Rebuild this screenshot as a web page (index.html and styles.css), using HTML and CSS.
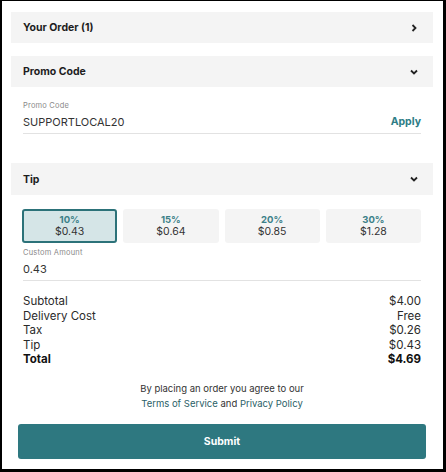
FILE: index.html
```html
<!DOCTYPE html>
<html>
<head>
<meta charset="utf-8">
<link rel="stylesheet" href="styles.css">
</head>
<body>
<div class="frame">
  <div class="section-head">
    <span>Your Order (1)</span>
    <svg class="chev" width="10" height="10" viewBox="0 0 10 10"><polyline points="3.5,2 6.5,5 3.5,8" fill="none" stroke="#222" stroke-width="1.8"/></svg>
  </div>

  <div class="section-head gap">
    <span>Promo Code</span>
    <svg class="chev" width="10" height="10" viewBox="0 0 10 10"><polyline points="2,3.5 5,6.5 8,3.5" fill="none" stroke="#222" stroke-width="1.8"/></svg>
  </div>
  <div class="field promo">
    <div class="field-label">Promo Code</div>
    <div class="field-row">
      <span class="field-value">SUPPORTLOCAL20</span>
      <span class="apply">Apply</span>
    </div>
  </div>

  <div class="section-head tip-head">
    <span>Tip</span>
    <svg class="chev" width="10" height="10" viewBox="0 0 10 10"><polyline points="2,3.5 5,6.5 8,3.5" fill="none" stroke="#222" stroke-width="1.8"/></svg>
  </div>
  <div class="tips">
    <div class="tip selected"><span class="pct">10%</span><span class="amt">$0.43</span></div>
    <div class="tip"><span class="pct">15%</span><span class="amt">$0.64</span></div>
    <div class="tip"><span class="pct">20%</span><span class="amt">$0.85</span></div>
    <div class="tip"><span class="pct">30%</span><span class="amt">$1.28</span></div>
  </div>
  <div class="field custom">
    <div class="field-label">Custom Amount</div>
    <div class="field-row">
      <span class="field-value">0.43</span>
    </div>
  </div>

  <div class="summary">
    <div class="row"><span>Subtotal</span><span>$4.00</span></div>
    <div class="row"><span>Delivery Cost</span><span>Free</span></div>
    <div class="row"><span>Tax</span><span>$0.26</span></div>
    <div class="row"><span>Tip</span><span>$0.43</span></div>
    <div class="row total"><span>Total</span><span>$4.69</span></div>
  </div>

  <div class="terms">
    By placing an order you agree to our<br>
    <span class="link">Terms of Service</span> and <span class="link">Privacy Policy</span>
  </div>

  <div class="submit">Submit</div>
</div>
</body>
</html>
```

FILE: styles.css
```css
* { box-sizing: border-box; }
html, body { margin: 0; padding: 0; background: #fff; }
body {
  font-family: Inter, "Noto Sans", sans-serif;
  color: #222;
}
.frame {
  width: 446px;
  height: 472px;
  border-style: solid;
  border-color: #000;
  border-width: 1px 3px 3px 2px;
  padding: 11px 10px 0 9px;
  display: flex;
  flex-direction: column;
}
.section-head {
  height: 31px;
  background: #f4f4f4;
  display: flex;
  align-items: center;
  justify-content: space-between;
  padding: 0 14px 0 12px;
  font-size: 10.5px;
  font-weight: 700;
  color: #1d1d1d;
}
.section-head.gap { margin-top: 13px; }
.section-head.tip-head { margin-top: 29px; height: 32px; }
.chev { display: block; }

.field { padding: 0 12px; }
.promo { padding-top: 14px; }
.field-label {
  font-size: 7.5px;
  line-height: 10px;
  color: #8a8a8a;
  letter-spacing: 0.2px;
}
.field-row {
  height: 23px;
  display: flex;
  align-items: center;
  justify-content: space-between;
  border-bottom: 1px solid #e2e2e2;
  padding-bottom: 1px;
}
.field-value {
  font-size: 11px;
  color: #333;
}
.apply {
  font-size: 10.5px;
  font-weight: 700;
  color: #2e7d86;
}

.tips {
  margin-top: 14px;
  padding: 0 12px 0 11px;
  display: grid;
  grid-template-columns: repeat(4, 1fr);
  gap: 6px;
}
.tip {
  height: 34px;
  background: #f4f4f4;
  border-radius: 3px;
  display: flex;
  flex-direction: column;
  align-items: center;
  justify-content: center;
  line-height: 12px;
}
.tip.selected {
  background: #d5e5e7;
  border: 2px solid #2c7279;
}
.pct {
  font-size: 9.5px;
  font-weight: 700;
  color: #3b8088;
}
.amt {
  font-size: 10.5px;
  color: #333;
}
.custom { margin-top: 5px; }

.summary {
  margin-top: 13px;
  padding: 0 12px;
  font-size: 11.5px;
  line-height: 14.5px;
  color: #2a2a2a;
}
.row {
  display: flex;
  justify-content: space-between;
}
.row.total { font-weight: 700; color: #111; }

.terms {
  margin-top: 14px;
  text-align: center;
  font-size: 9.5px;
  line-height: 15px;
  color: #333;
}
.link { color: #2b5f68; }

.submit {
  margin: 13px 7px 0 7px;
  height: 35px;
  background: #2e7880;
  border-radius: 3px;
  color: #fff;
  font-size: 10.5px;
  font-weight: 700;
  display: flex;
  align-items: center;
  justify-content: center;
}
```
